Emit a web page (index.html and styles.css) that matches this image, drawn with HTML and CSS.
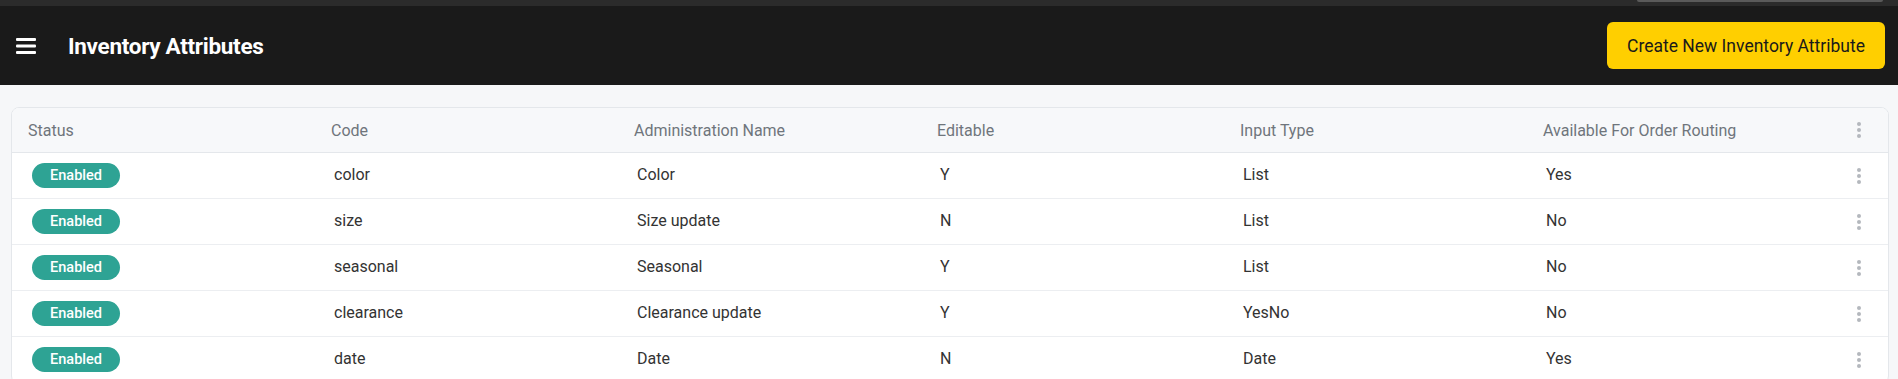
FILE: index.html
```html
<!DOCTYPE html>
<html lang="en">
<head>
<meta charset="utf-8">
<title>Inventory Attributes</title>
<link rel="stylesheet" href="styles.css">
</head>
<body>
<div class="chrome"><div class="chrome-tab"></div></div>
<header class="topbar">
  <div class="topbar-left">
    <button class="menu-btn" aria-label="Menu">
      <svg width="20" height="18" viewBox="0 0 20 18"><rect x="0" y="1" width="20" height="3" rx="1"/><rect x="0" y="7.5" width="20" height="3" rx="1"/><rect x="0" y="14" width="20" height="3" rx="1"/></svg>
    </button>
    <h1 class="title">Inventory Attributes</h1>
  </div>
  <button class="create-btn">Create New Inventory Attribute</button>
</header>
<main class="content">
  <div class="card">
    <div class="row head">
      <div class="cell">Status</div>
      <div class="cell">Code</div>
      <div class="cell">Administration Name</div>
      <div class="cell">Editable</div>
      <div class="cell">Input Type</div>
      <div class="cell">Available For Order Routing</div>
      <div class="cell kebab-cell"><span class="kebab"><i></i><i></i><i></i></span></div>
    </div>
    <div class="row">
      <div class="cell status-cell"><span class="badge">Enabled</span></div>
      <div class="cell">color</div>
      <div class="cell">Color</div>
      <div class="cell">Y</div>
      <div class="cell">List</div>
      <div class="cell">Yes</div>
      <div class="cell kebab-cell"><span class="kebab"><i></i><i></i><i></i></span></div>
    </div>
    <div class="row">
      <div class="cell status-cell"><span class="badge">Enabled</span></div>
      <div class="cell">size</div>
      <div class="cell">Size update</div>
      <div class="cell">N</div>
      <div class="cell">List</div>
      <div class="cell">No</div>
      <div class="cell kebab-cell"><span class="kebab"><i></i><i></i><i></i></span></div>
    </div>
    <div class="row">
      <div class="cell status-cell"><span class="badge">Enabled</span></div>
      <div class="cell">seasonal</div>
      <div class="cell">Seasonal</div>
      <div class="cell">Y</div>
      <div class="cell">List</div>
      <div class="cell">No</div>
      <div class="cell kebab-cell"><span class="kebab"><i></i><i></i><i></i></span></div>
    </div>
    <div class="row">
      <div class="cell status-cell"><span class="badge">Enabled</span></div>
      <div class="cell">clearance</div>
      <div class="cell">Clearance update</div>
      <div class="cell">Y</div>
      <div class="cell">YesNo</div>
      <div class="cell">No</div>
      <div class="cell kebab-cell"><span class="kebab"><i></i><i></i><i></i></span></div>
    </div>
    <div class="row">
      <div class="cell status-cell"><span class="badge">Enabled</span></div>
      <div class="cell">date</div>
      <div class="cell">Date</div>
      <div class="cell">N</div>
      <div class="cell">Date</div>
      <div class="cell">Yes</div>
      <div class="cell kebab-cell"><span class="kebab"><i></i><i></i><i></i></span></div>
    </div>
  </div>
</main>
</body>
</html>
```
FILE: styles.css
```css
* { box-sizing: border-box; }
html, body { margin: 0; padding: 0; }
body {
  font-family: Roboto, "Liberation Sans", Arial, sans-serif;
  background: #f6f7f9;
  overflow: hidden;
  height: 379px;
}
.chrome {
  height: 6px;
  background: #2b2b2b;
  display: flex;
  justify-content: flex-end;
  padding-right: 15px;
}
.chrome-tab {
  width: 246px;
  height: 2px;
  background: #5a5a5a;
  border-radius: 0 0 2px 2px;
}
.topbar {
  height: 79px;
  background: #1a1a1a;
  display: flex;
  align-items: center;
  justify-content: space-between;
  padding: 0 13px 0 16px;
}
.topbar-left { display: flex; align-items: center; }
.menu-btn {
  background: none;
  border: 0;
  padding: 0;
  width: 20px;
  height: 18px;
  display: flex;
  fill: #ffffff;
  margin-right: 32px;
}
.title {
  margin: 0;
  color: #ffffff;
  font-size: 22.5px;
  font-weight: 700;
  letter-spacing: -0.3px;
}
.create-btn {
  background: #ffcf00;
  border: 0;
  border-radius: 6px;
  height: 47px;
  width: 278px;
  font-family: inherit;
  font-size: 17.5px;
  color: #1a1a1a;
  padding: 0;
}
.content { padding: 22px 9px 0 11px; }
.card {
  background: #ffffff;
  border: 1px solid #e4e7eb;
  border-radius: 8px;
  overflow: hidden;
}
.row {
  display: grid;
  grid-template-columns: repeat(6, 1fr) 58px;
  height: 46px;
  align-items: center;
  border-bottom: 1px solid #eceef1;
  font-size: 16px;
  color: #333333;
}
.row .cell { padding-left: 19px; padding-bottom: 2px; }
.row .status-cell { padding-bottom: 0; display: flex; }
.row.head {
  height: 45px;
  background: #f7f8fa;
  color: #6f757c;
  border-bottom: 1px solid #e4e7eb;
}
.row.head .cell { padding-left: 16px; padding-bottom: 0; }
.row .kebab-cell,
.row.head .kebab-cell { padding: 0; display: flex; justify-content: center; }
.kebab { display: flex; flex-direction: column; gap: 2px; }
.kebab i { display: block; width: 4px; height: 4px; border-radius: 50%; background: #b4b8bd; }
.badge {
  display: inline-flex;
  align-items: center;
  justify-content: center;
  width: 88px;
  height: 25px;
  border-radius: 13px;
  background: #2ea394;
  color: #ffffff;
  font-size: 14.5px;
  font-weight: 500;
  margin-left: 1px;
}
```
